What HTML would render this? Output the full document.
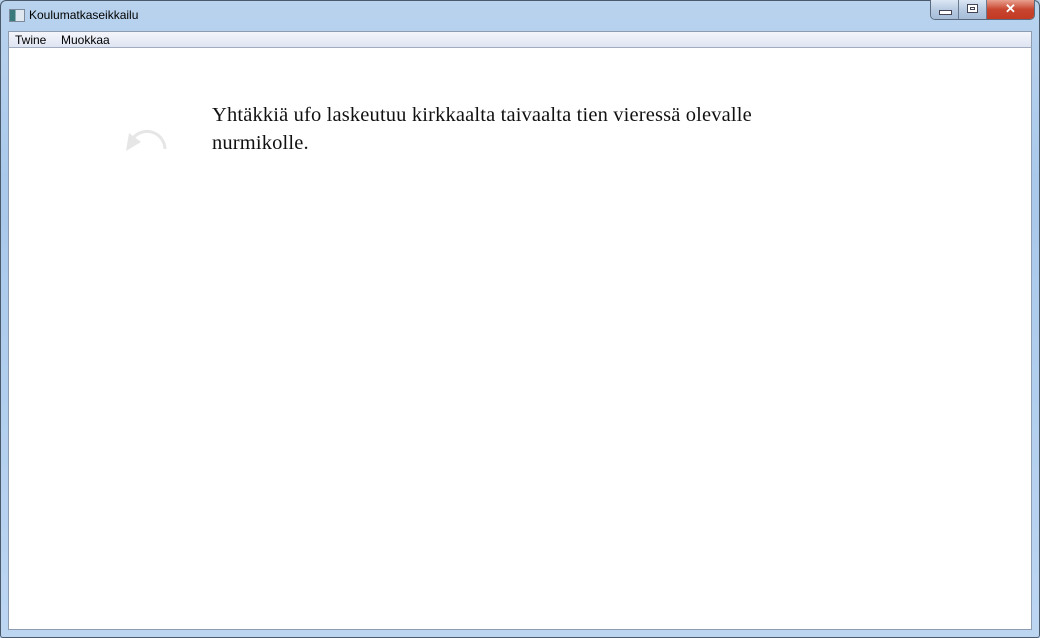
<!DOCTYPE html>
<html><head><meta charset="utf-8">
<style>
html,body{margin:0;padding:0;width:1040px;height:638px;overflow:hidden;}
body{background:linear-gradient(180deg,#b9d3ee 0%,#a9c8ea 30%,#bcd6f2 100%);position:relative;font-family:"Liberation Sans",sans-serif;}
.frame{position:absolute;left:0;top:0;width:1038px;height:636px;border:1px solid #4a5a6a;border-radius:6px 6px 3px 3px;box-sizing:content-box;}
.title{position:absolute;left:29px;top:8px;font-size:12px;color:#000;}
.ico{position:absolute;left:9px;top:9px;width:14px;height:11px;border:1px solid #7a8a9a;background:linear-gradient(90deg,#3a7a7a 0 40%,#dfe8ef 40%);}
.menu{position:absolute;left:8px;top:31px;width:1024px;height:17px;background:linear-gradient(180deg,#f4f6fb,#dfe4f2);border:1px solid #8e9cb0;border-bottom:1px solid #a0acbf;box-sizing:border-box;font-size:12px;}
.menu span{position:absolute;top:1px;color:#000;}
.content{position:absolute;left:8px;top:48px;width:1024px;height:582px;background:#fff;border:1px solid #8e9cb0;box-sizing:border-box;border-top:none;}
.btns{position:absolute;left:930px;top:0;height:19px;width:103px;border:1px solid #5a6a7e;border-top:none;border-radius:0 0 5px 5px;overflow:hidden;display:flex;}
.b{height:19px;background:linear-gradient(180deg,#dbe6f3,#b8cbe2 50%,#a5bcd8);border-right:1px solid #6a7a90;position:relative;}
.c{background:linear-gradient(180deg,#e8a090,#c8452e 50%,#c23a24);flex:1;border:none;color:#fff;font-weight:bold;font-size:13px;text-align:center;line-height:18px;}
.txt{position:absolute;left:212px;top:101px;width:560px;font-family:"Liberation Serif",serif;font-size:20.5px;letter-spacing:0.15px;line-height:28px;color:#111;}
</style></head><body>
<div class="frame"></div>
<div class="ico"></div>
<div class="title">Koulumatkaseikkailu</div>
<div class="btns">
 <div class="b" style="width:27px"><div style="position:absolute;left:8px;top:10px;width:11px;height:3px;background:#fff;border:1px solid #445"></div></div>
 <div class="b" style="width:27px"><div style="position:absolute;left:8px;top:4px;width:9px;height:7px;border:1px solid #445;background:#fff"><div style="margin:2px;width:5px;height:3px;border:1px solid #445;box-sizing:border-box"></div></div></div>
 <div class="b c">✕</div>
</div>
<div class="menu"><span style="left:6px">Twine</span><span style="left:52px">Muokkaa</span></div>
<div class="content"></div>
<svg style="position:absolute;left:120px;top:124px" width="50" height="30" viewBox="0 0 50 30">
 <path d="M45 25 A18 18 0 0 0 14 13" fill="none" stroke="#e6e6e6" stroke-width="3"/>
 <path d="M6 27 L9 9 L21 18 Z" fill="#e6e6e6"/>
</svg>
<div class="txt">Yhtäkkiä ufo laskeutuu kirkkaalta taivaalta tien vieressä olevalle nurmikolle.</div>
</body></html>
